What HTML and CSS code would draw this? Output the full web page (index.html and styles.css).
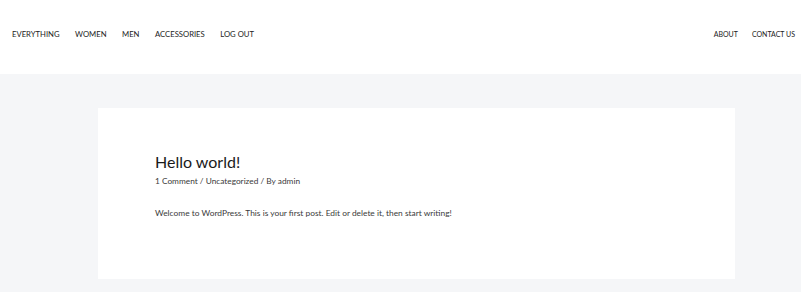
FILE: index.html
```html
<!DOCTYPE html>
<html lang="en">
<head>
    <meta charset="UTF-8">
    <title>Hello world!</title>
    <link rel="stylesheet" href="styles.css">
</head>
<body>
    <header class="site-header">
        <nav class="main-nav">
            <a href="#">Everything</a>
            <a href="#">Women</a>
            <a href="#">Men</a>
            <a href="#">Accessories</a>
            <a href="#">Log out</a>
        </nav>
        <nav class="side-nav">
            <a href="#">About</a>
            <a href="#">Contact us</a>
        </nav>
    </header>
    <main class="site-content">
        <article class="post">
            <h1 class="post-title">Hello world!</h1>
            <div class="post-meta">
                <a href="#">1 Comment</a> / <a href="#">Uncategorized</a> / By <a href="#">admin</a>
            </div>
            <p class="post-body">Welcome to WordPress. This is your first post. Edit or delete it, then start writing!</p>
        </article>
    </main>
</body>
</html>
```

FILE: styles.css
```css
body {
    margin: 0;
    font-family: Lato, "Open Sans", sans-serif;
    background-color: #f5f6f8;
    color: #3a3a3a;
}
a {
    color: inherit;
    text-decoration: none;
}
.site-header {
    height: 74px;
    box-sizing: border-box;
    background-color: #fff;
    display: flex;
    justify-content: space-between;
    align-items: center;
    padding: 0 6px 6px 12px;
}
.main-nav, .side-nav {
    display: flex;
    gap: 15.5px;
    font-size: 7.7px;
    text-transform: uppercase;
    color: #222;
}
.side-nav {
    gap: 14px;
    font-size: 7px;
}
.site-content {
    padding: 34px 66px 13px 98px;
}
.post {
    background-color: #fff;
    height: 171px;
    box-sizing: border-box;
    padding: 44px 57px;
}
.post-title {
    margin: 0;
    font-size: 16px;
    font-weight: 400;
    color: #1a1a1a;
    line-height: 20px;
}
.post-meta {
    font-size: 8.3px;
    margin-top: 4px;
    color: #3a3a3a;
}
.post-body {
    font-size: 8.4px;
    margin: 22px 0 0;
    color: #3a3a3a;
}
```
